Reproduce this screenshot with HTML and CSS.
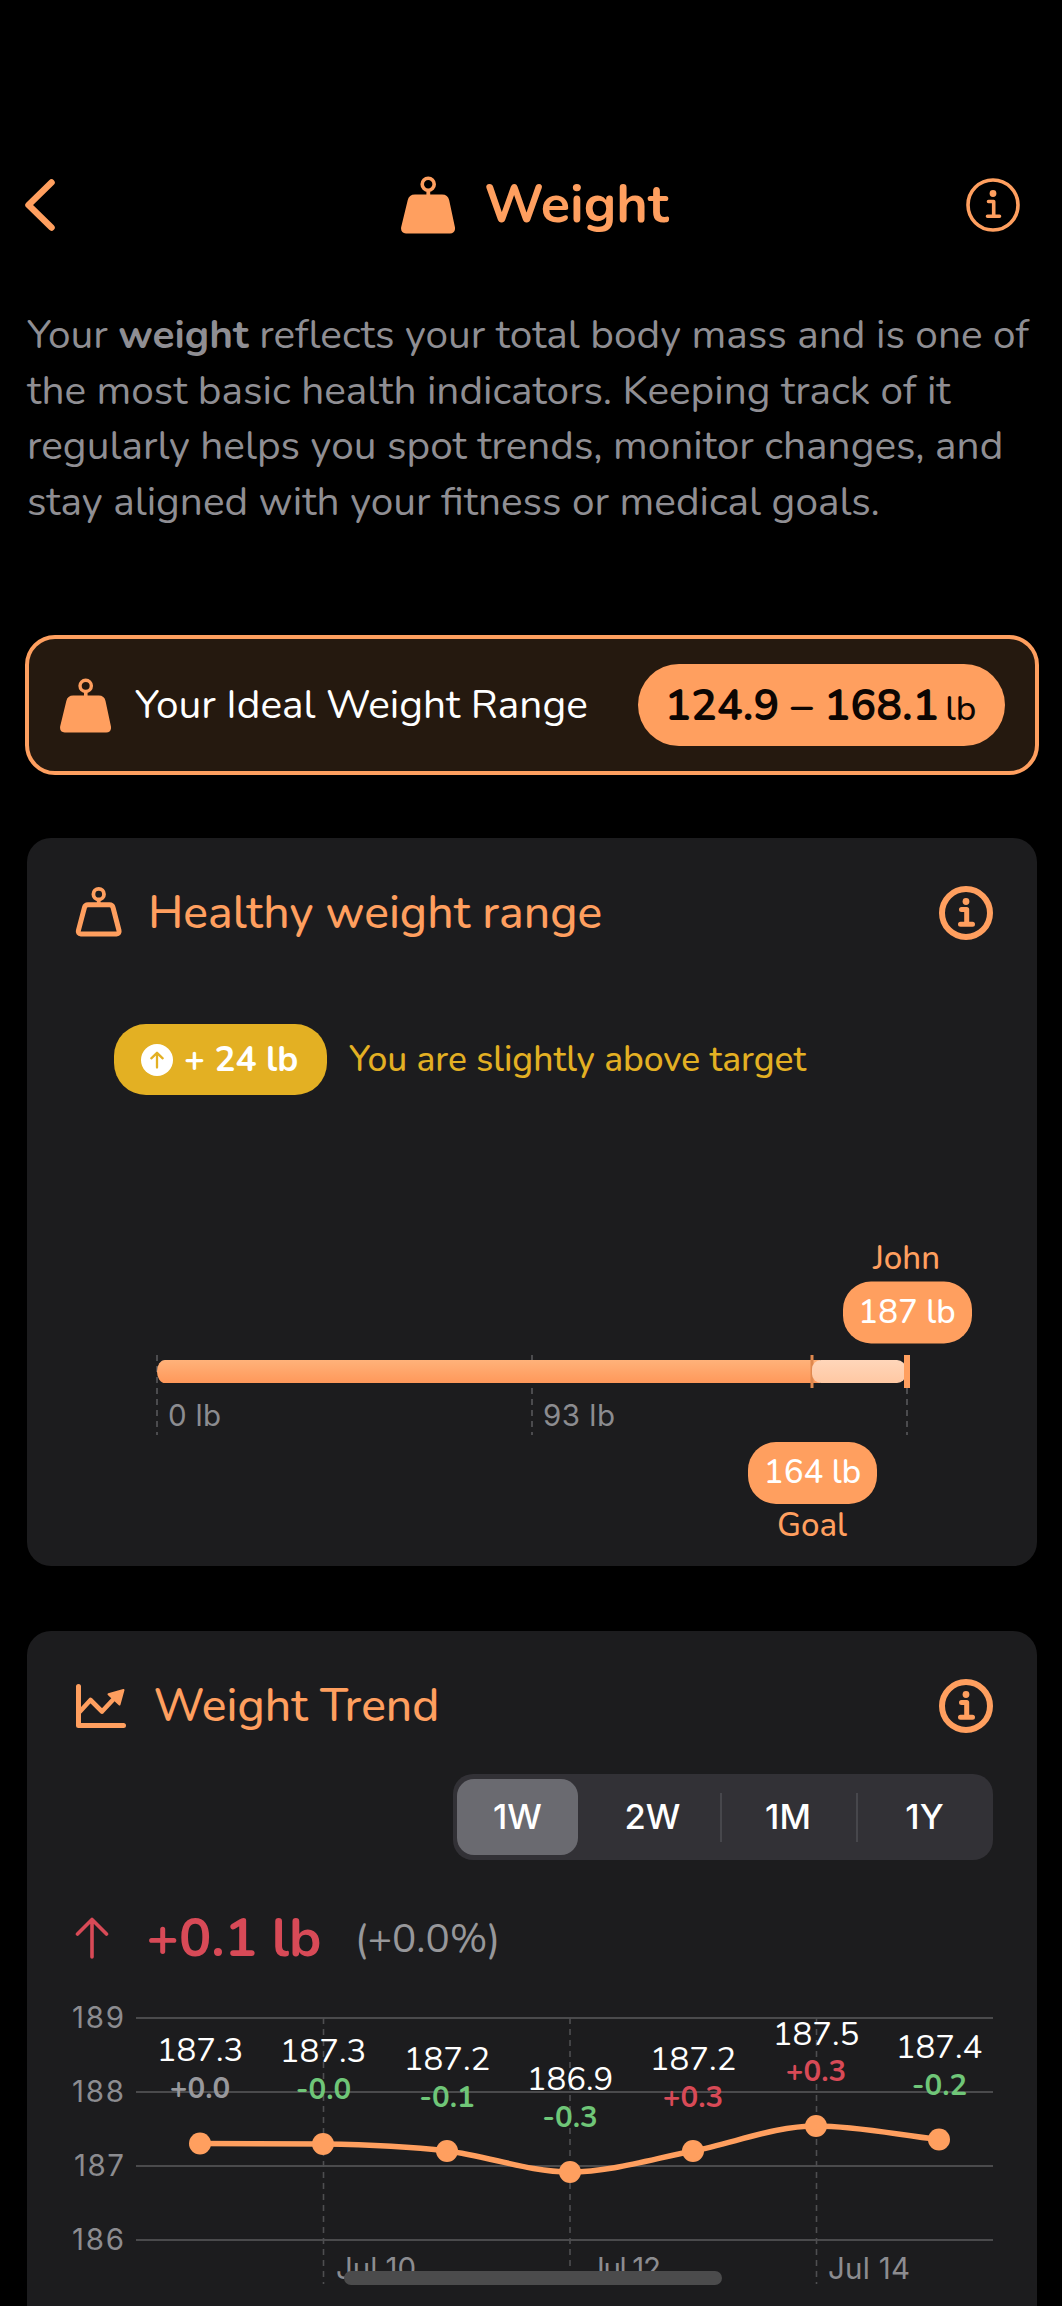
FILE: index.html
```html
<!DOCTYPE html>
<html lang="en">
<head>
<meta charset="utf-8">
<title>Weight</title>
<link rel="stylesheet" href="styles.css">
</head>
<body>
<svg class="defs" aria-hidden="true">
  <symbol id="weight-solid" viewBox="0 0 54 58">
    <circle cx="27.2" cy="8.2" r="6" fill="none" stroke="currentColor" stroke-width="3.6"/>
    <path d="M25.4 13h3.8v7h-3.8z" fill="currentColor"/>
    <path d="M14 18.5H41c4 0 6.400 2 7.200 5.700L53.900 51c.7 3.800-1.200 6.500-4.900 6.500H5C1.300 57.500-.5 54.800.2 51L6.700 24.200C7.500 20.500 10 18.500 14 18.500Z" fill="currentColor"/>
  </symbol>
  <symbol id="weight-outline" viewBox="0 0 48 52">
    <g fill="none" stroke="currentColor">
      <circle cx="23.700" cy="8.200" r="5.300" stroke-width="3.800"/>
      <path d="M23.700 13v5" stroke-width="3.800"/>
      <path d="M13 18.700H34.500c2 0 3 .8 3.500 2.700L44 44.500c.5 2-.4 3.400-2.400 3.400H5.800C3.800 47.900 2.900 46.500 3.400 44.500L9.500 21.400C10 19.500 11 18.700 13 18.700Z" stroke-width="5"/>
    </g>
  </symbol>
  <symbol id="info" viewBox="0 0 54 54">
    <circle cx="27" cy="15.500" r="3.400" fill="currentColor"/>
    <path d="M22.500 23.500H27.700V38M21.500 38.300H33.500" fill="none" stroke="currentColor" stroke-linecap="round" stroke-linejoin="round"/>
  </symbol>
</svg>

<header class="topbar">
  <svg class="back" viewBox="0 0 30 52"><path d="M26.500 3.500 3.500 26 26.500 48.500"/></svg>
  <div class="heading">
    <svg class="heading-icon"><use href="#weight-solid"/></svg>
    <h1>Weight</h1>
  </div>
  <svg class="info info-thin" viewBox="0 0 54 54"><circle class="ring" cx="27" cy="27" r="25"/><use href="#info"/></svg>
</header>

<p class="intro">Your <b>weight</b> reflects your total body mass and is one of<br>the most basic health indicators. Keeping track of it<br>regularly helps you spot trends, monitor changes, and<br>stay aligned with your fitness or medical goals.</p>

<section class="ideal">
  <svg class="ideal-icon"><use href="#weight-solid"/></svg>
  <span class="ideal-label">Your Ideal Weight Range</span>
  <div class="ideal-pill"><b>124.9 – 168.1</b><small>lb</small></div>
</section>

<section class="card range">
  <div class="card-head">
    <svg class="icon-weight"><use href="#weight-outline"/></svg>
    <h2>Healthy weight range</h2>
    <svg class="info info-bold" viewBox="0 0 54 54"><circle class="ring" cx="27" cy="27" r="24"/><use href="#info"/></svg>
  </div>
  <div class="status">
    <div class="status-pill">
      <svg viewBox="0 0 32 32"><circle cx="16" cy="16" r="16" fill="#fff"/><path d="M16 23.500V9M10.300 14.300 16 8.800l5.700 5.500" fill="none" stroke="#e3b023" stroke-width="2.300" stroke-linecap="round" stroke-linejoin="round"/></svg>
      <b>+ 24 lb</b>
    </div>
    <span class="status-text">You are slightly above target</span>
  </div>
  <svg class="range-chart" viewBox="27 1230 1010 336">
    <defs>
      <linearGradient id="bar" x1="0" y1="0" x2="0" y2="1"><stop offset="0" stop-color="#ffb27a"/><stop offset="1" stop-color="#ff985a"/></linearGradient>
      <linearGradient id="rest" x1="0" y1="0" x2="0" y2="1"><stop offset="0" stop-color="#ffd6ba"/><stop offset="1" stop-color="#ffc8a3"/></linearGradient>
    </defs>
    <path class="dash" d="M157 1355V1435M532 1355V1435M907 1355V1435"/>
    <path d="M165 1360H820V1383H165a8 11.500 0 0 1 0-23Z" fill="url(#bar)"/>
    <path d="M812 1355V1388" stroke="#e0894f" stroke-width="3"/>
    <rect x="812" y="1360" width="94" height="23" rx="9" fill="url(#rest)"/>
    <path d="M907 1355V1388" stroke="#ff9f5f" stroke-width="6"/>
    <text class="name" x="906.500" y="1269">John</text>
    <rect class="tag" x="843" y="1281.500" width="129" height="62" rx="28"/>
    <text class="tag-text" x="907" y="1323">187 lb</text>
    <rect class="tag" x="748" y="1442" width="129" height="62" rx="28"/>
    <text class="tag-text" x="812.500" y="1483">164 lb</text>
    <text class="name" x="812" y="1536">Goal</text>
    <text class="axis" x="168" y="1426" textLength="53">0 lb</text>
    <text class="axis" x="543" y="1426" textLength="72">93 lb</text>
  </svg>
</section>

<section class="card trend">
  <div class="card-head">
    <svg class="icon-trend" viewBox="0 0 52 46"><path d="M3.500 3.500V42.500H48.500" stroke-width="5"/><path d="M5 28.500 15.500 17 27 28.500 41 13.500" stroke-width="4.600"/><path d="M48.500 7 33.500 11.200 44.500 21.500Z" fill="currentColor" stroke-width="2"/></svg>
    <h2>Weight Trend</h2>
    <svg class="info info-bold" viewBox="0 0 54 54"><circle class="ring" cx="27" cy="27" r="24"/><use href="#info"/></svg>
  </div>
  <div class="segments">
    <span class="seg on">1W</span><span class="seg next">2W</span><span class="seg split">1M</span><span class="seg split">1Y</span>
  </div>
  <div class="delta">
    <svg viewBox="0 0 34 42"><path d="M17 40V3M2.500 17 17 2.500 31.500 17"/></svg>
    <b>+0.1 lb</b>
    <span class="pct">(+0.0%)</span>
  </div>
  <svg class="trend-chart" viewBox="27 1990 1010 316">
    <path class="grid" d="M136 2018H993M136 2092H993M136 2166H993M136 2240H993"/>
    <path class="dash" d="M323.500 2018V2284M570 2018V2284M816.500 2018V2284"/>
    <g class="axis">
      <text x="72" y="2028" textLength="52">189</text><text x="72" y="2102" textLength="52">188</text><text x="74" y="2176" textLength="50">187</text><text x="72" y="2250" textLength="52">186</text>
      <text x="336" y="2279" textLength="80">Jul 10</text><text x="588" y="2279" textLength="73">Jul 12</text><text x="828" y="2279" textLength="82">Jul 14</text>
    </g>
    <path class="curve" d="M200 2143.500C241 2143.500 282 2143.500 323 2144S406 2146 447 2151S529 2172 570 2172S652 2159 693 2151S775 2126 816 2126S898 2135 939 2139.500"/>
    <g class="points"><circle cx="200" cy="2143.500" r="11"/><circle cx="323" cy="2144" r="11"/><circle cx="447" cy="2151" r="11"/><circle cx="570" cy="2172" r="11"/><circle cx="693" cy="2151" r="11"/><circle cx="816" cy="2126" r="11"/><circle cx="939" cy="2139.500" r="11"/></g>
    <g class="values"><text x="200" y="2061">187.3</text><text x="323" y="2062">187.3</text><text x="447" y="2069.500">187.2</text><text x="570" y="2090">186.9</text><text x="693" y="2069.500">187.2</text><text x="816" y="2044.500">187.5</text><text x="939" y="2057.500">187.4</text></g>
    <g class="changes"><text x="200" y="2098" class="flat">+0.0</text><text x="323.500" y="2099" class="down">-0.0</text><text x="447" y="2106.500" class="down">-0.1</text><text x="570" y="2127" class="down">-0.3</text><text x="693" y="2106.500" class="up">+0.3</text><text x="816" y="2081" class="up">+0.3</text><text x="939.500" y="2094.500" class="down">-0.2</text></g>
    <rect x="344" y="2271" width="378" height="14" rx="7" fill="#4b4b4c"/>
  </svg>
</section>
</body>
</html>
```
FILE: styles.css
```css
* { box-sizing: border-box; }
body {
  margin: 0;
  width: 1062px;
  height: 2306px;
  overflow: hidden;
  background: #000;
  color: #ff9f5f;
  font-family: "Nunito", "Lato", sans-serif;
}
svg { display: block; flex: none; }
.defs { width: 0; height: 0; position: absolute; }
h1, h2, p { margin: 0; }

.topbar {
  display: flex;
  align-items: center;
  height: 240px;
  padding: 170px 42px 0 25px;
}
.back { width: 30px; height: 52px; fill: none; stroke: currentColor; stroke-width: 6.5; stroke-linecap: round; stroke-linejoin: round; }
.heading { display: flex; align-items: center; margin-left: 346px; }
.heading-icon { width: 54px; height: 58px; }
h1 { margin-left: 29px; padding-bottom: 2px; font-size: 54px; line-height: 68px; font-weight: 700; white-space: nowrap; }
.info { width: 54px; height: 54px; margin-left: auto; fill: none; }
.ring { stroke: currentColor; }
.info-thin { stroke-width: 3.6; }
.info-bold { stroke-width: 5; }
.info-bold .ring { stroke-width: 6; }

.intro {
  height: 395px;
  padding: 67px 0 0 27px;
  color: #8f8e93;
  font-size: 40.6px;
  line-height: 55.6px;
  white-space: nowrap;
}

.ideal {
  display: flex;
  align-items: center;
  height: 140px;
  margin: 0 23px 0 25px;
  padding: 0 30px 0 31px;
  border: 4px solid #ff9f5f;
  border-radius: 30px;
  background: #25190f;
}
.ideal-icon { width: 51px; height: 55px; }
.ideal-label { margin-left: 24px; padding-bottom: 2px; font-size: 40.6px; color: #fff; white-space: nowrap; }
.ideal-pill {
  display: flex;
  align-items: baseline;
  margin-left: auto;
  width: 367px;
  height: 82px;
  padding-left: 27px;
  border-radius: 41px;
  background: #ff9f5f;
  color: #0c0603;
  line-height: 84px;
  white-space: nowrap;
}
.ideal-pill b { font-size: 43.2px; font-weight: 700; }
.ideal-pill small { margin-left: 6.5px; font-size: 35px; font-weight: 500; }

.card { margin: 0 25px 0 27px; background: #1c1c1e; border-radius: 24px; }
.range { height: 728px; margin-top: 63px; }
.trend { height: 675px; margin-top: 65px; border-radius: 24px 24px 0 0; }
.card-head { display: flex; align-items: center; padding: 0 44px 0 48px; height: 150px; }
.icon-weight { width: 48px; height: 52px; margin-top: -3px; }
.icon-trend { width: 52px; height: 46px; fill: none; stroke: currentColor; stroke-linecap: round; stroke-linejoin: round; }
h2 { margin-left: 25px; font-size: 46.3px; line-height: 60px; font-weight: 500; white-space: nowrap; }
.trend h2 { margin-left: 26.5px; }

.status { display: flex; align-items: center; height: 71px; margin: 36px 0 0 87px; white-space: nowrap; font-size: 35.4px; }
.status-pill { display: flex; align-items: center; width: 213px; height: 71px; padding-left: 27px; border-radius: 32px; background: #e3b023; color: #fff; font-size: 35px; }
.status-pill svg { width: 32px; height: 32px; margin-right: 11px; }
.status-text { margin-left: 22px; padding-bottom: 1px; color: #e3b023; font-weight: 500; }
.range-chart { width: 1010px; height: 336px; margin-top: 135px; }
.dash { fill: none; stroke: #58585b; stroke-width: 1.6; stroke-dasharray: 6 5; }
.name { fill: #ff9f5f; font-size: 33px; font-weight: 500; text-anchor: middle; }
.tag { fill: #ff9f5f; }
.tag-text { fill: #fff; font-size: 33px; font-weight: 500; text-anchor: middle; }
.axis { fill: #8c8c90; font-family: Inter, sans-serif; font-size: 29.5px; }

.segments { display: grid; grid-template-columns: 121px 142px 136px 1fr; width: 540px; height: 86px; margin: -7px 44px 0 auto; padding: 5px 0 5px 4px; border-radius: 20px; background: #323136; font: 500 34.5px/76px Inter, sans-serif; color: #fff; text-align: center; }
.seg.on { background: #6a6a70; border-radius: 17px; }
.seg.next { padding-left: 7px; }
.seg.split { background: linear-gradient(#47474c, #47474c) 0 50% / 2px 49px no-repeat; }
.delta { display: flex; align-items: center; height: 130px; padding-left: 48px; margin-top: 13px; color: #d84a57; white-space: nowrap; }
.delta svg { width: 34px; height: 42px; fill: none; stroke: currentColor; stroke-width: 3.6; stroke-linecap: round; stroke-linejoin: round; }
.delta b { margin-left: 37.5px; font-size: 54px; }
.pct { margin-left: 33.5px; font-size: 40.5px; color: #97979a; }
.trend-chart { width: 1010px; height: 316px; margin-top: -13px; }
.grid { stroke: #4a4a4c; stroke-width: 2; }
.trend-chart .dash { stroke: #4e4e50; }
.curve { fill: none; stroke: #ff9f5f; stroke-width: 5.5; }
.points { fill: #ff9f5f; }
.values { fill: #fff; font-size: 33px; font-weight: 400; text-anchor: middle; }
.changes { font-size: 29.5px; font-weight: 700; text-anchor: middle; }
.flat { fill: #98989c; }
.down { fill: #6fc678; }
.up { fill: #d84a57; }
```
